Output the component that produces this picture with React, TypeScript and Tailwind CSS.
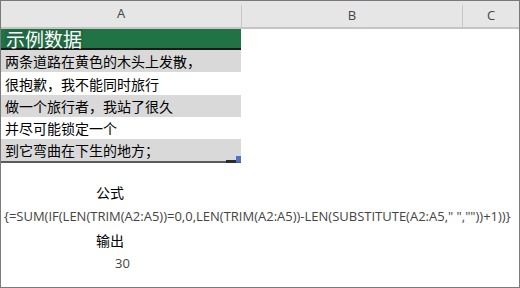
import React from "react";

const rows = [
  { text: "两条道路在黄色的木头上发散，", shade: true, h: "h-[22px]" },
  { text: "很抱歉，我不能同时旅行", shade: false, h: "h-[23px]" },
  { text: "做一个旅行者，我站了很久", shade: true, h: "h-[22px]" },
  { text: "并尽可能锁定一个", shade: false, h: "h-[22px]" },
  { text: "到它弯曲在下生的地方；", shade: true, h: "h-[22px]" },
];

const cjk = "font-['Noto_Sans_CJK_SC',sans-serif]";
const ui = "font-['Open_Sans','Noto_Sans_CJK_SC',sans-serif]";

export default function App() {
  return (
    <div className="w-[520px] h-[288px] box-border border border-[#7a7a7a] bg-white overflow-hidden flex flex-col">
      {/* column headers */}
      <div className={`h-[28px] flex bg-[#e6e6e6] border-b-2 border-[#c4c4c4] text-[13px] text-[#444] ${ui}`}>
        <div className="w-[240px] flex items-center justify-center">A</div>
        <div className="w-[221px] flex items-center justify-center border-l border-[#c8c8c8] mt-[4px]">B</div>
        <div className="flex-1 flex items-center justify-center border-l border-[#c8c8c8] mt-[4px]">C</div>
      </div>

      {/* sheet cells */}
      <div className="w-[240px] flex flex-col">
        <div className={`h-[21px] bg-[#217346] border-b-2 border-[#1a1a1a] flex items-center pl-[4px] text-[19px] leading-none text-white ${cjk}`}>
          <span className="bg-[#1f6b41] px-[1px]">示例数据</span>
        </div>
        {rows.map((r, i) => (
          <div
            key={i}
            className={`${r.h} flex items-center pl-[4px] text-[14px] leading-none text-black ${cjk} ${r.shade ? "bg-[#d9d9d9]" : "bg-white"}`}
          >
            {r.text}
          </div>
        ))}
        <div className="relative h-[2px] bg-[#5a5a5a]">
          <div className="absolute right-0 -top-[5px] w-[5px] h-[6px] bg-[#4a72c8]" />
          <div className="absolute right-[5px] -top-[1px] w-[10px] h-[3px] bg-[#2b2b2b]" />
        </div>
      </div>

      {/* formula block */}
      <div className={`flex flex-col pt-[17px] text-[13px] leading-[24px] ${ui}`}>
        <div className={`pl-[95px] text-[14px] text-black ${cjk}`}>公式</div>
        <div className="pl-[3px] text-[#444] whitespace-nowrap">
          {'{=SUM(IF(LEN(TRIM(A2:A5))=0,0,LEN(TRIM(A2:A5))-LEN(SUBSTITUTE(A2:A5," ",""))+1))}'}
        </div>
        <div className={`pl-[95px] text-[14px] text-black ${cjk}`}>输出</div>
        <div className="pl-[114px] leading-[23px] text-[#444]">30</div>
      </div>
    </div>
  );
}
